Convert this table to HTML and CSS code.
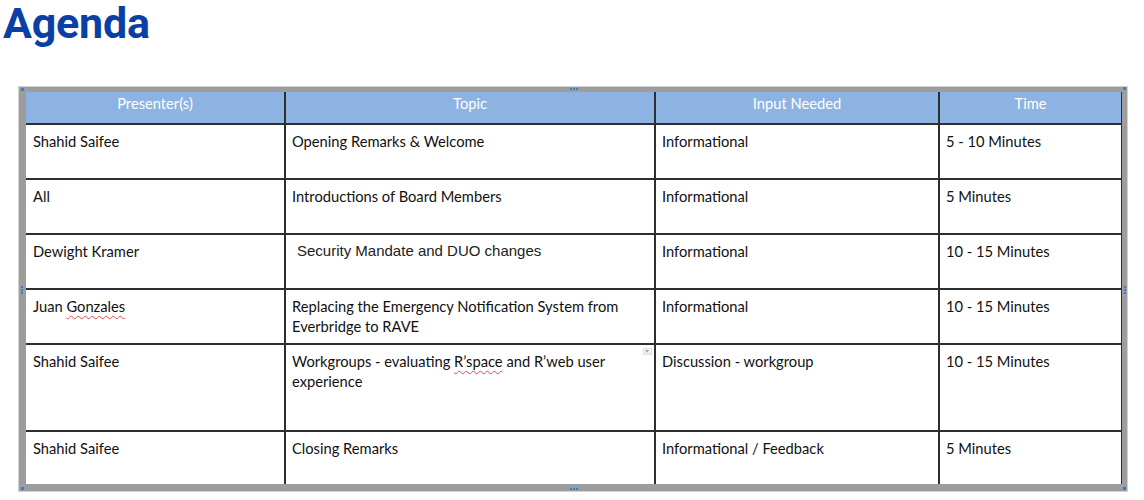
FILE: index.html
```html
<!DOCTYPE html>
<html lang="en">
<head>
<meta charset="utf-8">
<title>Agenda</title>
<link rel="stylesheet" href="styles.css">
</head>
<body>
<h1 class="title">Agenda</h1>
<div class="frame">
  <span class="handle h-tl"></span>
  <span class="handle h-tr"></span>
  <span class="handle h-bl"></span>
  <span class="handle h-br"></span>
  <span class="handle-h h-tm"><i></i><i></i><i></i></span>
  <span class="handle-h h-bm"><i></i><i></i><i></i></span>
  <span class="handle-v h-lm"><i></i><i></i><i></i></span>
  <span class="handle-v h-rm"><i></i><i></i><i></i></span>
  <div class="grid">
    <div class="th">Presenter(s)</div>
    <div class="th">Topic</div>
    <div class="th">Input Needed</div>
    <div class="th">Time</div>

    <div class="td first">Shahid Saifee</div>
    <div class="td">Opening Remarks &amp; Welcome</div>
    <div class="td">Informational</div>
    <div class="td">5 - 10 Minutes</div>

    <div class="td first">All</div>
    <div class="td">Introductions of Board Members</div>
    <div class="td">Informational</div>
    <div class="td">5 Minutes</div>

    <div class="td first">Dewight Kramer</div>
    <div class="td arial">Security Mandate and DUO changes</div>
    <div class="td">Informational</div>
    <div class="td">10 - 15 Minutes</div>

    <div class="td first">Juan <span class="spell">Gonzales</span></div>
    <div class="td">Replacing the Emergency Notification System from Everbridge to RAVE</div>
    <div class="td">Informational</div>
    <div class="td">10 - 15 Minutes</div>

    <div class="td first">Shahid Saifee</div>
    <div class="td rel">Workgroups - evaluating <span class="spell">R’space</span> and R’web user experience<span class="dropmark"></span></div>
    <div class="td">Discussion - workgroup</div>
    <div class="td">10 - 15 Minutes</div>

    <div class="td first">Shahid Saifee</div>
    <div class="td">Closing Remarks</div>
    <div class="td">Informational / Feedback</div>
    <div class="td">5 Minutes</div>
  </div>
</div>
</body>
</html>
```

FILE: styles.css
```css
html, body {
  margin: 0;
  padding: 0;
  background: #ffffff;
}

.title {
  margin: 0;
  padding: 0 0 0 3px;
  height: 86px;
  font-family: Roboto, "Liberation Sans", sans-serif;
  font-weight: 700;
  font-size: 43px;
  line-height: 46px;
  color: #0a3fa6;
  letter-spacing: -0.2px;
}

.frame {
  position: relative;
  margin-left: 18px;
  width: 1110px;
  box-sizing: border-box;
  border: 1px solid #d2d2d2;
  background: #9d9d9d;
  padding: 5px 5px 7px 7px;
}

.grid {
  display: grid;
  grid-template-columns: 258px 368px 282px 181px;
  grid-template-rows: 31px 53px 53px 53px 53px 85px 52px;
  gap: 2px;
  background: #2e2e2e;
  font-family: Lato, "Open Sans", sans-serif;
  font-size: 14.7px;
  line-height: 19.5px;
  color: #111111;
}

.th {
  background: #8db3e2;
  color: #ffffff;
  text-align: center;
  padding-top: 2px;
}

.td {
  background: #ffffff;
  padding: 7px 8px 0 6px;
}

.td.first {
  padding-left: 7px;
}

.rel {
  position: relative;
}

.arial {
  font-family: "Liberation Sans", Arial, sans-serif;
  font-size: 15px;
  color: #222222;
}

.td.arial {
  padding-left: 11px;
  padding-top: 6px;
}

.spell {
  text-decoration: underline wavy #e04848;
  text-decoration-thickness: 1px;
  text-underline-offset: 3px;
  text-decoration-skip-ink: none;
}

.dropmark {
  position: absolute;
  right: 2px;
  top: 3px;
  width: 7px;
  height: 5px;
  background: #f1f1f1;
  border: 1px solid #e0e0e0;
}

.dropmark::after {
  content: "";
  position: absolute;
  left: 1px;
  top: 1px;
  border-left: 2.5px solid transparent;
  border-right: 2.5px solid transparent;
  border-top: 3px solid #a8a8a8;
}

.handle {
  position: absolute;
  width: 3px;
  height: 3px;
  background: #2f7de1;
}

.h-tl { left: 2px; top: 1px; }
.h-tr { right: 1px; top: 0px; }
.h-bl { left: 2px; bottom: 1px; }
.h-br { right: 1px; bottom: 1px; }

.handle-h,
.handle-v {
  position: absolute;
  display: flex;
  gap: 1px;
}

.handle-v { flex-direction: column; }

.handle-h i,
.handle-v i {
  display: block;
  width: 2px;
  height: 2px;
  background: #2f7de1;
}

.h-tm { left: 551px; top: 1px; }
.h-bm { left: 551px; bottom: 1px; }
.h-lm { left: 2px; top: 199px; }
.h-rm { right: 1px; top: 199px; }
```
